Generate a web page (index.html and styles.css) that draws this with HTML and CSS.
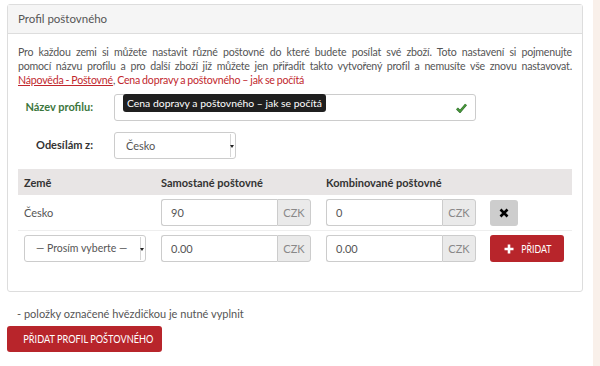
FILE: index.html
```html
<!DOCTYPE html>
<html lang="cs">
<head>
<meta charset="utf-8">
<link rel="stylesheet" href="styles.css">
</head>
<body>
<div class="page">
  <div class="panel">
    <div class="panel-heading">Profil poštovného</div>
    <div class="panel-body">
      <p class="intro"><span class="line">Pro každou zemi si můžete nastavit různé poštovné do které budete posílat své zboží. Toto nastavení si pojmenujte</span><span class="line">pomocí názvu profilu a pro další zboží již můžete jen přiřadit takto vytvořený profil a nemusíte vše znovu nastavovat.</span><span class="line last"><a class="link underline" href="#">Nápověda - Poštovné</a>, <a class="link" href="#">Cena dopravy a poštovného – jak se počítá</a></span></p>

      <div class="form-row">
        <label class="label success">Název profilu:</label>
        <div class="field-wrap">
          <div class="input name-input"><span class="hidden-val">Test</span>
            <svg class="check" width="11" height="10" viewBox="0 0 11 10"><path d="M1 5.5 L4 8.5 L10 1.5" fill="none" stroke="#2f6b2f" stroke-width="2.6"/><path d="M1 5.5 L4 8.5 L10 1.5" fill="none" stroke="#4a9a3a" stroke-width="1.4"/></svg>
          </div>
          <div class="tooltip">Cena dopravy a poštovného – jak se počítá</div>
        </div>
      </div>

      <div class="form-row">
        <label class="label">Odesílám z:</label>
        <div class="select country-select">Česko<span class="caret"></span></div>
      </div>

      <div class="table">
        <div class="thead">
          <div class="cell c1">Země</div>
          <div class="cell c2">Samostané poštovné</div>
          <div class="cell c3">Kombinované poštovné</div>
          <div class="cell c4"></div>
        </div>
        <div class="trow">
          <div class="cell c1 country">Česko</div>
          <div class="cell c2"><div class="group"><div class="ginput">90</div><div class="addon">CZK</div></div></div>
          <div class="cell c3"><div class="group"><div class="ginput">0</div><div class="addon">CZK</div></div></div>
          <div class="cell c4"><div class="btn-del"><svg width="10" height="10" viewBox="0 0 10 10"><path d="M1.5 1.5 L8.5 8.5 M8.5 1.5 L1.5 8.5" stroke="#000" stroke-width="2.6"/></svg></div></div>
        </div>
        <div class="trow last">
          <div class="cell c1"><div class="select small-select">— Prosím vyberte —<span class="caret"></span></div></div>
          <div class="cell c2"><div class="group"><div class="ginput">0.00</div><div class="addon">CZK</div></div></div>
          <div class="cell c3"><div class="group"><div class="ginput">0.00</div><div class="addon">CZK</div></div></div>
          <div class="cell c4"><div class="btn-add"><svg width="10" height="10" viewBox="0 0 10 10"><path d="M5 0.5 V9.5 M0.5 5 H9.5" stroke="#fff" stroke-width="2.6"/></svg><span class="narrow">PŘIDAT</span></div></div>
        </div>
      </div>
    </div>
  </div>
  <p class="note">- položky označené hvězdičkou je nutné vyplnit</p>
  <div class="btn-main"><span class="narrow">PŘIDAT PROFIL POŠTOVNÉHO</span></div>
</div>
</body>
</html>
```
FILE: styles.css
```css
html, body {
  margin: 0;
  padding: 0;
  background: #f9f0ea;
}
body {
  font-family: "Lato", "Open Sans", sans-serif;
  font-size: 11px;
  color: #555;
}
.page {
  width: 593px;
  height: 366px;
  background: #fff;
  padding-top: 4px;
  box-sizing: border-box;
  overflow: hidden;
}
.panel {
  margin-left: 7px;
  width: 576px;
  box-sizing: border-box;
  border: 1px solid #ddd;
  border-radius: 3px;
  height: 288px;
}
.panel-heading {
  height: 28px;
  line-height: 28px;
  background: #f5f5f5;
  border-bottom: 1px solid #ddd;
  padding-left: 10px;
  font-size: 11.5px;
  color: #555;
}
.panel-body {
  padding: 11px 10px 0 10px;
}
.intro {
  margin: 0;
  line-height: 14px;
  font-size: 10.6px;
  letter-spacing: -0.2px;
  word-spacing: -0.5px;
}
.intro .line {
  display: block;
  white-space: nowrap;
  text-align: justify;
  text-align-last: justify;
}
.intro .line.last {
  text-align-last: left;
}
.link {
  color: #c1272d;
  text-decoration: none;
}
.link.underline {
  text-decoration: underline;
}
.form-row {
  display: flex;
  align-items: center;
  margin-top: 7px;
}
.form-row + .form-row {
  margin-top: 11px;
}
.label {
  width: 75px;
  padding-right: 21px;
  text-align: right;
  font-weight: bold;
  color: #333;
  margin-top: -2px;
}
.label.success {
  color: #3c763d;
}
.field-wrap {
  position: relative;
}
.input {
  width: 362px;
  height: 27px;
  box-sizing: border-box;
  border: 1px solid #ccc;
  border-radius: 3px;
  padding-left: 28px;
  padding-top: 4px;
  line-height: 25px;
  color: #555;
  position: relative;
}
.hidden-val {
  visibility: hidden;
}
.check {
  position: absolute;
  right: 8px;
  top: 8px;
}
.tooltip {
  position: absolute;
  left: 9px;
  top: 0;
  height: 18px;
  line-height: 18px;
  padding: 0 4px;
  background: #1f1f1f;
  color: #fff;
  border-radius: 3px;
  font-size: 10.4px;
  white-space: nowrap;
}
.select {
  position: relative;
  height: 27px;
  box-sizing: border-box;
  border: 1px solid #ccc;
  border-radius: 3px;
  line-height: 25px;
  color: #555;
}
.country-select {
  width: 122px;
  padding-left: 11px;
}
.select .caret {
  position: absolute;
  right: 1px;
  top: 1px;
  bottom: 1px;
  width: 3px;
  border-left: 1px solid #d6d6d6;
}
.select .caret::after {
  content: "";
  position: absolute;
  right: 0;
  top: 11px;
  border-left: 2px solid transparent;
  border-right: 2px solid transparent;
  border-top: 3px solid #222;
}
.table {
  margin-top: 10px;
}
.thead, .trow {
  display: flex;
}
.thead {
  background: #e8e5e5;
  height: 26px;
  align-items: center;
  font-weight: bold;
  color: #333;
}
.trow {
  height: 35px;
  align-items: center;
  border-bottom: 1px solid #eee;
}
.trow.last {
  border-bottom: none;
}
.cell {
  padding-left: 6px;
  box-sizing: border-box;
}
.c1 { width: 137px; }
.c2 { width: 165px; }
.c3 { width: 164px; }
.c4 { width: 88px; }
.group {
  display: flex;
  width: 150px;
  height: 27px;
}
.ginput {
  width: 116px;
  box-sizing: border-box;
  border: 1px solid #ccc;
  border-right: none;
  border-radius: 3px 0 0 3px;
  padding-left: 9px;
  line-height: 25px;
  color: #555;
}
.addon {
  width: 34px;
  box-sizing: border-box;
  border: 1px solid #ccc;
  border-radius: 0 3px 3px 0;
  background: #eaeaea;
  text-align: center;
  line-height: 25px;
  color: #888;
}
.small-select {
  width: 122px;
  padding-left: 11px;
  font-size: 10.5px;
}
.btn-del {
  width: 28px;
  height: 26px;
  background: #cdcdcd;
  border-radius: 3px;
  display: flex;
  align-items: center;
  justify-content: center;
}
.btn-add {
  width: 74px;
  height: 27px;
  background: #b8252b;
  border-radius: 3px;
  display: flex;
  align-items: center;
  justify-content: center;
  gap: 4px;
  color: #fff;
  font-size: 11px;
}
.narrow {
  display: inline-block;
  transform: scaleX(0.8);
  white-space: nowrap;
}
.btn-add .narrow {
  width: 32px;
  text-align: center;
}
.note {
  margin: 15px 0 0 17px;
  line-height: 14px;
}
.btn-main {
  margin: 5px 0 0 7px;
  width: 155px;
  height: 26px;
  line-height: 26px;
  background: #b8252b;
  border-radius: 3px;
  color: #fff;
  text-align: center;
  font-size: 11.5px;
  white-space: nowrap;
}
```
